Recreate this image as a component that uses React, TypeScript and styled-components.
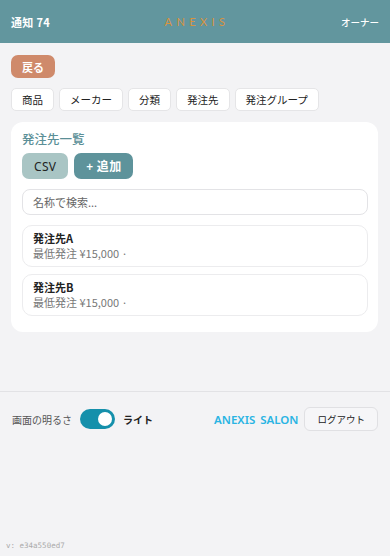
import React from "react";
import styled, { createGlobalStyle } from "styled-components";

const Global = createGlobalStyle`
  html, body { margin: 0; padding: 0; background: #f3f3f5; }
  body { font-family: "Noto Sans CJK JP", "Noto Sans", sans-serif; color: #222; }
  * { box-sizing: border-box; }
`;

const Page = styled.div`
  min-height: 556px;
  display: flex;
  flex-direction: column;
`;

const Header = styled.header`
  height: 43px;
  background: #62969e;
  display: grid;
  grid-template-columns: 1fr auto 1fr;
  align-items: center;
  padding: 0 11px 0 11px;
  color: #fff;
`;

const Notice = styled.div`
  font-size: 11px;
  font-weight: 700;
  letter-spacing: 0.3px;
`;

const Logo = styled.div`
  font-family: "Lato", "Noto Sans", sans-serif;
  color: #d8933f;
  font-size: 11px;
  letter-spacing: 4.4px;
  padding-left: 4px;
`;

const Role = styled.div`
  justify-self: end;
  font-size: 9.5px;
  font-weight: 500;
`;

const Main = styled.main`
  padding: 12px 12px 0 11px;
  display: flex;
  flex-direction: column;
  align-items: flex-start;
`;

const BackButton = styled.button`
  height: 23px;
  padding: 0 11px;
  border: none;
  border-radius: 7px;
  background: #cf8a6b;
  color: #fff;
  font-family: inherit;
  font-size: 11px;
  font-weight: 700;
`;

const Tabs = styled.nav`
  display: flex;
  gap: 5px;
  margin-top: 10px;
`;

const Tab = styled.button`
  height: 23px;
  padding: 0 10px;
  background: #fff;
  border: 1px solid #e5e5e7;
  border-radius: 5px;
  font-family: inherit;
  font-size: 10.5px;
  color: #222;
`;

const Card = styled.section`
  margin-top: 11px;
  align-self: stretch;
  background: #fff;
  border-radius: 12px;
  padding: 8px 10px 16px 11px;
  display: flex;
  flex-direction: column;
`;

const Title = styled.h2`
  margin: 0;
  font-size: 12.5px;
  font-weight: 500;
  color: #5b8f97;
  line-height: 18px;
`;

const Actions = styled.div`
  display: flex;
  gap: 6px;
  margin-top: 5px;
`;

const ActionButton = styled.button<{ $primary?: boolean }>`
  height: 26px;
  padding: 0 12px;
  border: none;
  border-radius: 7px;
  font-family: "Noto Sans", "Noto Sans CJK JP", sans-serif;
  font-size: 12px;
  font-weight: ${(p) => (p.$primary ? 600 : 400)};
  background: ${(p) => (p.$primary ? "#5e939b" : "#a9c5c4")};
  color: ${(p) => (p.$primary ? "#fff" : "#222")};
  letter-spacing: 0.3px;
`;

const Search = styled.input`
  margin-top: 10px;
  height: 26px;
  width: 100%;
  border: 1px solid #e3e3e6;
  border-radius: 8px;
  padding: 0 10px;
  font-family: inherit;
  font-size: 11px;
  color: #222;
  &::placeholder { color: #666; }
  outline: none;
`;

const List = styled.div`
  margin-top: 10px;
  display: flex;
  flex-direction: column;
  gap: 7px;
`;

const Item = styled.div`
  height: 42px;
  border: 1px solid #ececee;
  border-radius: 10px;
  padding: 6px 10px;
  display: flex;
  flex-direction: column;
  justify-content: center;
`;

const ItemName = styled.div`
  font-size: 11px;
  font-weight: 700;
  line-height: 15px;
`;

const ItemSub = styled.div`
  font-size: 11px;
  color: #777;
  line-height: 15px;
`;

const Footer = styled.footer`
  margin-top: 59px;
  border-top: 1px solid #e2e2e5;
  padding: 15px 12px 0 12px;
  display: flex;
  align-items: center;
`;

const Brightness = styled.span`
  font-size: 10px;
  color: #555;
`;

const Toggle = styled.span`
  margin-left: 8px;
  width: 35px;
  height: 20px;
  border-radius: 10px;
  background: #1590ab;
  position: relative;
  &::after {
    content: "";
    position: absolute;
    right: 3px;
    top: 3px;
    width: 14px;
    height: 14px;
    border-radius: 50%;
    background: #fff;
  }
`;

const ModeLabel = styled.span`
  margin-left: 8px;
  font-size: 10px;
  font-weight: 700;
`;

const Brand = styled.span`
  margin-left: auto;
  font-family: "Noto Sans", sans-serif;
  font-size: 11.5px;
  font-weight: 600;
  color: #29b4e3;
  word-spacing: 2px;
`;

const Logout = styled.button`
  margin-left: 6px;
  height: 24px;
  padding: 0 12px;
  background: #f6f6f8;
  border: 1px solid #e0e0e3;
  border-radius: 6px;
  font-family: inherit;
  font-size: 9.5px;
  color: #222;
`;

const Version = styled.div`
  margin-top: auto;
  padding: 0 0 6px 6px;
  font-family: "DejaVu Sans Mono", monospace;
  font-size: 7.5px;
  color: #aaa;
`;

const tabs = ["商品", "メーカー", "分類", "発注先", "発注グループ"];
const suppliers = ["発注先A", "発注先B"];

export default function App() {
  return (
    <Page>
      <Global />
      <Header>
        <Notice>通知 74</Notice>
        <Logo>ANEXIS</Logo>
        <Role>オーナー</Role>
      </Header>
      <Main>
        <BackButton>戻る</BackButton>
        <Tabs>
          {tabs.map((t) => (
            <Tab key={t}>{t}</Tab>
          ))}
        </Tabs>
        <Card>
          <Title>発注先一覧</Title>
          <Actions>
            <ActionButton>CSV</ActionButton>
            <ActionButton $primary>+ 追加</ActionButton>
          </Actions>
          <Search placeholder="名称で検索..." />
          <List>
            {suppliers.map((s) => (
              <Item key={s}>
                <ItemName>{s}</ItemName>
                <ItemSub>最低発注 ¥15,000 ·</ItemSub>
              </Item>
            ))}
          </List>
        </Card>
      </Main>
      <Footer>
        <Brightness>画面の明るさ</Brightness>
        <Toggle />
        <ModeLabel>ライト</ModeLabel>
        <Brand>ANEXIS SALON</Brand>
        <Logout>ログアウト</Logout>
      </Footer>
      <Version>v: e34a550ed7</Version>
    </Page>
  );
}
